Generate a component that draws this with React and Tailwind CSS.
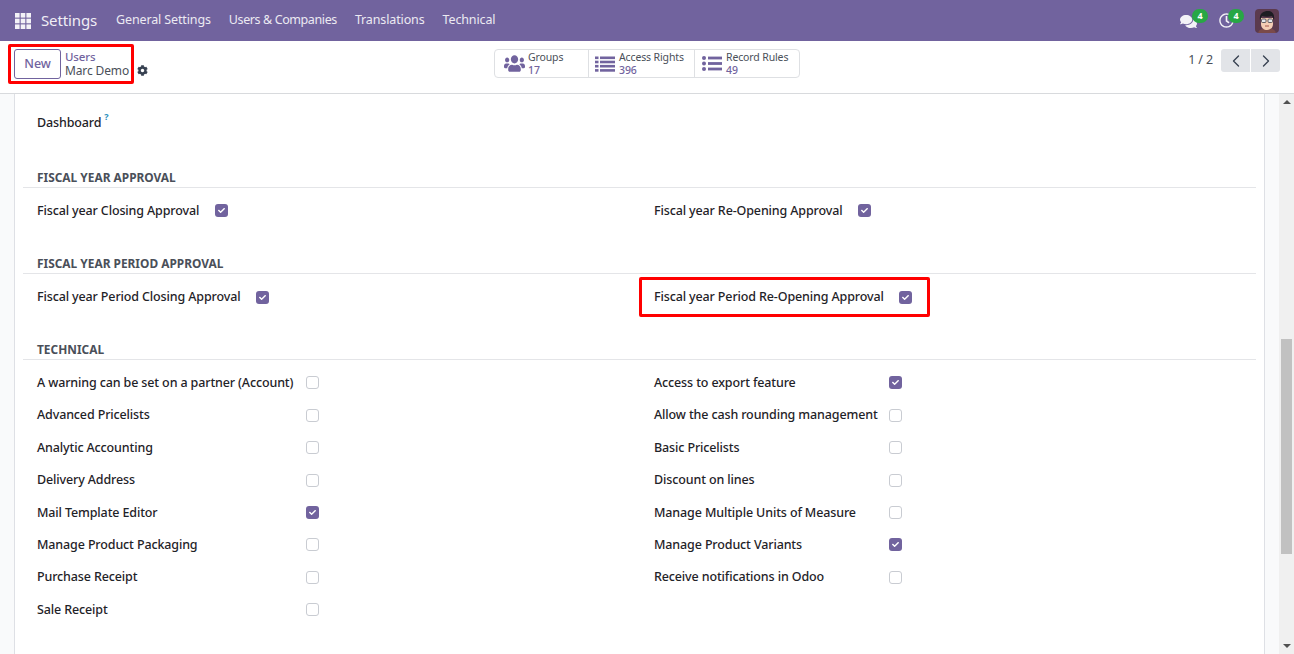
import { FaCog, FaComments, FaRegClock, FaUsers, FaCheck } from 'react-icons/fa';
import { LuChevronLeft, LuChevronRight } from 'react-icons/lu';

const technicalLeft = [
  ['A warning can be set on a partner (Account)', false],
  ['Advanced Pricelists', false],
  ['Analytic Accounting', false],
  ['Delivery Address', false],
  ['Mail Template Editor', true],
  ['Manage Product Packaging', false],
  ['Purchase Receipt', false],
  ['Sale Receipt', false],
];

const technicalRight = [
  ['Access to export feature', true],
  ['Allow the cash rounding management', false],
  ['Basic Pricelists', false],
  ['Discount on lines', false],
  ['Manage Multiple Units of Measure', false],
  ['Manage Product Variants', true],
  ['Receive notifications in Odoo', false],
];

const Checkbox = ({ checked }) => (
  <span
    className={
      checked
        ? 'mt-[-1px] flex h-[13px] w-[13px] shrink-0 items-center justify-center rounded-[3px] bg-[#71639e] text-white'
        : 'mt-[-1px] h-[13px] w-[13px] shrink-0 rounded-[3px] border border-[#c9ccd2] bg-white'
    }
  >
    {checked && <FaCheck className="text-[7px]" />}
  </span>
);

const Row = ({ label, checked, labelClass }) => (
  <div className="flex h-[32.4px] items-center">
    <span className={`whitespace-nowrap font-medium text-[#1f2328] ${labelClass}`}>{label}</span>
    <Checkbox checked={checked} />
  </div>
);

const SectionTitle = ({ children }) => (
  <h2 className="ml-[-14px] mr-[8px] h-[20px] border-b border-[#e4e5e8] pl-[14px] text-[11.9px] font-bold uppercase leading-[18px] tracking-normal text-[#4a4f59]">
    {children}
  </h2>
);

const StatButton = ({ icon, label, value, className }) => (
  <div className={`flex h-full items-center ${className}`}>
    {icon}
    <div className="flex flex-col text-[10.5px] leading-[13px]">
      <span className="text-[#4a4f59]">{label}</span>
      <span className="font-medium text-[#71639e]">{value}</span>
    </div>
  </div>
);

const ListIcon = () => (
  <svg viewBox="0 0 20 16" className="mr-[4px] h-[16px] w-[20px]" fill="#71639e">
    <rect x="0" y="0.5" width="3.5" height="2.6" />
    <rect x="5" y="0.5" width="15" height="2.6" />
    <rect x="0" y="4.7" width="3.5" height="2.6" />
    <rect x="5" y="4.7" width="15" height="2.6" />
    <rect x="0" y="8.9" width="3.5" height="2.6" />
    <rect x="5" y="8.9" width="15" height="2.6" />
    <rect x="0" y="13.1" width="3.5" height="2.6" />
    <rect x="5" y="13.1" width="15" height="2.6" />
  </svg>
);

const ListUlIcon = () => (
  <svg viewBox="0 0 20 15" className="mr-[4px] h-[15px] w-[20px]" fill="#71639e">
    <circle cx="2" cy="2" r="2" />
    <rect x="6" y="0.6" width="14" height="2.8" />
    <circle cx="2" cy="7.5" r="2" />
    <rect x="6" y="6.1" width="14" height="2.8" />
    <circle cx="2" cy="13" r="2" />
    <rect x="6" y="11.6" width="14" height="2.8" />
  </svg>
);

const Avatar = () => (
  <svg viewBox="0 0 24 24" className="h-6 w-6 rounded-[4px]">
    <rect width="24" height="24" fill="#5b3a4e" />
    <path d="M3 24c1-4 5-5 9-5s8 1 9 5z" fill="#7a4a4a" />
    <path d="M6 9h12v6c0 4-3 6-6 6s-6-2-6-6z" fill="#f4cdb4" />
    <path d="M5 11C4 5 8 2 13 2c4 0 7 3 6 9l-2-4c-3 1-7 1-10 0z" fill="#1d1d22" />
    <rect x="6.5" y="10" width="4.5" height="3.5" rx="1" fill="#e5e7eb" stroke="#3f3f46" strokeWidth="0.8" />
    <rect x="13" y="10" width="4.5" height="3.5" rx="1" fill="#e5e7eb" stroke="#3f3f46" strokeWidth="0.8" />
    <path d="M10 17h4" stroke="#a4574f" strokeWidth="1" />
  </svg>
);

const AppsIcon = () => (
  <svg viewBox="0 0 16 16" className="h-4 w-4" fill="#f3f2f7">
    <rect x="0" y="0" width="4.6" height="4.6" />
    <rect x="5.7" y="0" width="4.6" height="4.6" />
    <rect x="11.4" y="0" width="4.6" height="4.6" />
    <rect x="0" y="5.7" width="4.6" height="4.6" />
    <rect x="5.7" y="5.7" width="4.6" height="4.6" />
    <rect x="11.4" y="5.7" width="4.6" height="4.6" />
    <rect x="0" y="11.4" width="4.6" height="4.6" />
    <rect x="5.7" y="11.4" width="4.6" height="4.6" />
    <rect x="11.4" y="11.4" width="4.6" height="4.6" />
  </svg>
);

const Badge = ({ className }) => (
  <span
    className={`absolute flex h-[14px] w-[16px] items-center justify-center rounded-full bg-[#28a745] text-[9px] font-bold text-white ${className}`}
  >
    4
  </span>
);

export default function App() {
  return (
    <div className="flex h-[654px] w-[1294px] flex-col overflow-hidden bg-white font-['Noto_Sans','Open_Sans',sans-serif] text-[12.5px] tracking-[-0.13px] text-[#1f2328]">
      {/* top navbar */}
      <header className="flex h-[41px] shrink-0 items-center bg-[#71639e] text-white">
        <div className="ml-[15px]">
          <AppsIcon />
        </div>
        <span className="ml-[10px] text-[15px] text-[#f0eef5]">Settings</span>
        <nav className="ml-[19px] flex gap-[18px] text-[#eceaf2]">
          <span>General Settings</span>
          <span className="tracking-[-0.4px]">Users &amp; Companies</span>
          <span>Translations</span>
          <span>Technical</span>
        </nav>
        <div className="ml-auto mr-[15px] flex items-center">
          <div className="relative mr-[13px] h-[20px] w-[26px]">
            <FaComments className="absolute left-0 top-[2px] text-[17px] text-[#f3f2f7]" />
            <Badge className="left-[12px] top-[-2px]" />
          </div>
          <div className="relative mr-[10px] h-[20px] w-[26px]">
            <FaRegClock className="absolute left-0 top-[2px] text-[15px] text-[#f3f2f7]" />
            <Badge className="left-[9px] top-[-2px]" />
          </div>
          <Avatar />
        </div>
      </header>

      {/* control panel */}
      <div className="relative flex h-[53px] shrink-0 items-start border-b border-[#d8dadd] bg-white">
        <div className="ml-[8px] mt-[3px] flex h-[40px] w-[126px] items-center rounded-[2px] border-[3px] border-[#f00] pl-[3px]">
          <button className="h-[30px] w-[47px] shrink-0 rounded-[3px] border border-[#71639e] bg-white font-medium text-[#71639e]">
            New
          </button>
          <div className="ml-[4px] flex flex-col leading-[14px]">
            <span className="text-[11.5px] font-medium text-[#71639e]">Users</span>
            <span className="whitespace-nowrap text-[12px] text-[#4a4f59]">Marc Demo</span>
          </div>
        </div>
        <FaCog className="ml-[3px] mt-[24px] text-[11px] text-[#374151]" />

        <div className="absolute left-[494px] top-[8px] flex h-[29px] w-[306px] rounded-[4px] border border-[#dee0e3]">
          <StatButton
            className="w-[94px] border-r border-[#dee0e3] pl-[9px]"
            icon={<FaUsers preserveAspectRatio="none" className="mr-[3px] h-[19px] w-[21px] text-[#71639e]" />}
            label="Groups"
            value="17"
          />
          <StatButton
            className="w-[106px] border-r border-[#dee0e3] pl-[6px]"
            icon={<ListIcon />}
            label="Access Rights"
            value="396"
          />
          <StatButton
            className="flex-1 pl-[7px]"
            icon={<ListUlIcon />}
            label="Record Rules"
            value="49"
          />
        </div>

        <div className="ml-auto mr-[14px] mt-[8px] flex items-center">
          <span className="mr-[8px] text-[#4a4f59]">1 / 2</span>
          <div className="flex h-[23px] gap-px">
            <span className="flex w-[29px] items-center justify-center rounded-l-[3px] bg-[#e2e4e8] text-[#374151]">
              <LuChevronLeft size={20} strokeWidth={1.6} />
            </span>
            <span className="flex w-[29px] items-center justify-center rounded-r-[3px] bg-[#e2e4e8] text-[#374151]">
              <LuChevronRight size={20} strokeWidth={1.6} />
            </span>
          </div>
        </div>
      </div>

      {/* form body */}
      <div className="flex min-h-0 flex-1 bg-[#f9fafb]">
        <div className="ml-[14px] w-[1251px] shrink-0 border-x border-[#dee0e5] bg-white pl-[22px]">
          <div className="flex h-[56px] items-start pt-[20px] font-medium">
            <span>Dashboard</span>
            <span className="ml-[3px] mt-[-2px] text-[9px] font-bold leading-[9px] text-[#2a8fbd]">?</span>
          </div>

          <div className="mt-[18px]">
            <SectionTitle>Fiscal year Approval</SectionTitle>
            <div className="mt-[7px] flex">
              <div className="w-[617px]">
                <Row label="Fiscal year Closing Approval" checked labelClass="w-[178px]" />
              </div>
              <Row label="Fiscal year Re-Opening Approval" checked labelClass="w-[204px]" />
            </div>
          </div>

          <div className="mt-[27px]">
            <SectionTitle>Fiscal year Period Approval</SectionTitle>
            <div className="mt-[7px] flex">
              <div className="w-[617px]">
                <Row label="Fiscal year Period Closing Approval" checked labelClass="w-[219px]" />
              </div>
              <div className="relative">
                <Row label="Fiscal year Period Re-Opening Approval" checked labelClass="w-[245px]" />
                {/* red annotation box */}
                <div className="absolute left-[-15px] top-[-4px] h-[40px] w-[291px] rounded-[2px] border-[3px] border-[#f00]" />
              </div>
            </div>
          </div>

          <div className="mt-[26px]">
            <SectionTitle>Technical</SectionTitle>
            <div className="mt-[7.4px] flex">
              <div className="w-[617px]">
                {technicalLeft.map(([label, checked]) => (
                  <Row key={label} label={label} checked={checked} labelClass="w-[269px]" />
                ))}
              </div>
              <div>
                {technicalRight.map(([label, checked]) => (
                  <Row key={label} label={label} checked={checked} labelClass="w-[235px]" />
                ))}
              </div>
            </div>
          </div>
        </div>

        <div className="flex-1" />

        {/* scrollbar */}
        <div className="flex w-[15px] shrink-0 flex-col bg-[#f0f0f0] px-[2px] pt-[6px]">
          <div className="ml-[2px] h-0 w-0 border-x-[4px] border-b-[4px] border-x-transparent border-b-[#505050]" />
          <div className="mt-[235px] h-[215px] bg-[#c1c1c1]" />
          <div className="mb-[6px] ml-[2px] mt-auto h-0 w-0 border-x-[4px] border-t-[4px] border-x-transparent border-t-[#505050]" />
        </div>
      </div>
    </div>
  );
}
